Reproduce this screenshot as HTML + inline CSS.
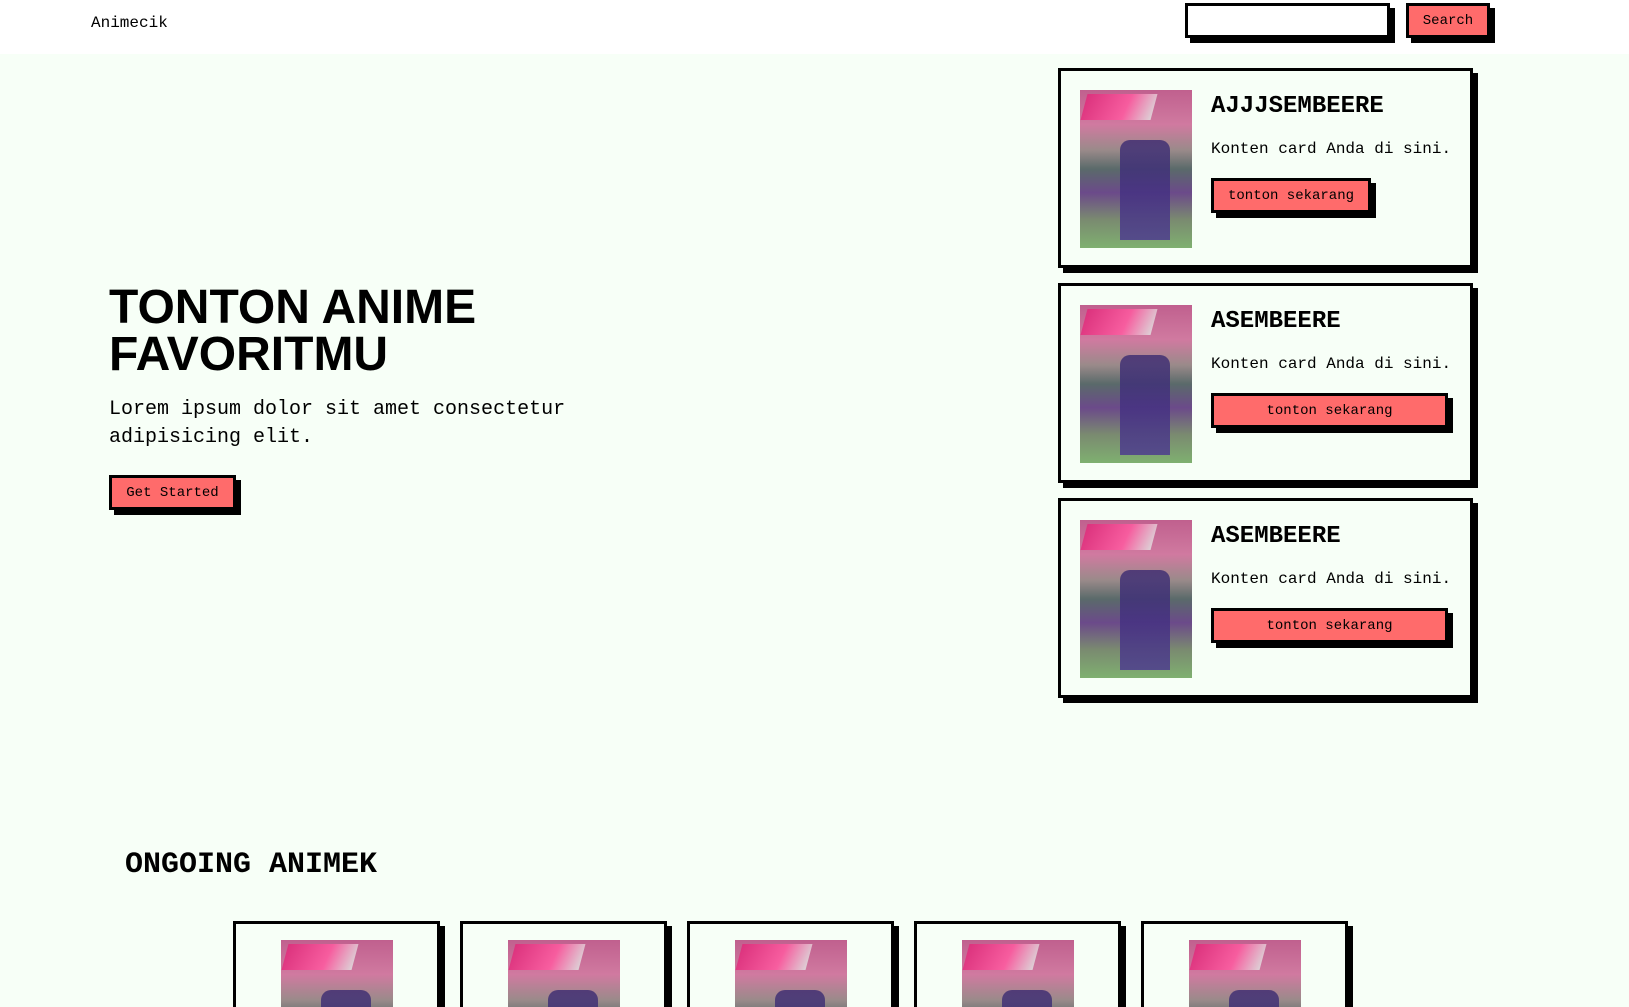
<!DOCTYPE html>
<html><head><style>
*{box-sizing:border-box;margin:0;padding:0}
html,body{width:1629px;height:1007px;overflow:hidden}
body{background:#f7fff7;font-family:"Liberation Mono",monospace;color:#000;position:relative}
.hdr{position:absolute;left:0;top:0;width:1629px;height:54px;background:#fff}
.abs{position:absolute}
.btn{position:absolute;background:#ff6b6b;border:3px solid #000;box-shadow:5px 5px 0 #000;font-size:14px;display:flex;align-items:center;justify-content:center;color:#000}
.card{position:absolute;left:1058px;width:415px;height:200px;border:3px solid #000;box-shadow:5px 5px 0 #000;background:#f7fff7}
.img{position:absolute;width:112px;height:158px;background:
linear-gradient(180deg,#c0608e 0%,#d07aa0 22%,#9a8a8a 38%,#5a6a6a 50%,#6b4a8a 65%,#7a8a70 82%,#7fb070 100%)}
.img:before{content:"";position:absolute;left:4px;top:4px;width:70px;height:26px;background:linear-gradient(100deg,#e02a7a,#ff5aa0 60%,#e0e0e0);transform:skewX(-15deg);opacity:.85}
.img:after{content:"";position:absolute;left:40px;top:50px;width:50px;height:100px;background:linear-gradient(180deg,#3a2a70,#4a3590);border-radius:10px 10px 0 0;opacity:.8}
.ct{position:absolute;left:150px;top:22px;font-size:24px;font-weight:bold}
.cp{position:absolute;left:150px;top:69px;font-size:16px}
.bc{position:absolute;top:921px;width:207px;height:86px;border:3px solid #000;border-bottom:none;box-shadow:5px 5px 0 #000;background:#f7fff7;overflow:hidden}
.bc .img{left:45px;top:16px}
</style></head><body>
<div class="hdr"></div>
<div class="abs" style="left:91px;top:14px;font-size:16px">Animecik</div>
<div class="abs" style="left:1185px;top:3px;width:205px;height:35px;background:#fff;border:3px solid #000;box-shadow:5px 5px 0 #000"></div>
<div class="btn" style="left:1406px;top:3px;width:84px;height:35px">Search</div>

<div class="abs" style="left:109px;top:284px;font-family:'Liberation Sans',sans-serif;font-weight:bold;font-size:48px;line-height:47px">TONTON ANIME<br>FAVORITMU</div>
<div class="abs" style="left:109px;top:396px;font-size:20px;line-height:28px;width:480px">Lorem ipsum dolor sit amet consectetur adipisicing elit.</div>
<div class="btn" style="left:109px;top:475px;width:127px;height:35px">Get Started</div>

<div class="card" style="top:68px"><div class="img" style="left:19px;top:19px"></div><div class="ct">AJJJSEMBEERE</div><div class="cp">Konten card Anda di sini.</div><div class="btn" style="left:150px;top:107px;width:160px;height:35px">tonton sekarang</div></div>
<div class="card" style="top:283px"><div class="img" style="left:19px;top:19px"></div><div class="ct">ASEMBEERE</div><div class="cp">Konten card Anda di sini.</div><div class="btn" style="left:150px;top:107px;width:237px;height:35px">tonton sekarang</div></div>
<div class="card" style="top:498px"><div class="img" style="left:19px;top:19px"></div><div class="ct">ASEMBEERE</div><div class="cp">Konten card Anda di sini.</div><div class="btn" style="left:150px;top:107px;width:237px;height:35px">tonton sekarang</div></div>

<div class="abs" style="left:125px;top:848px;font-size:30px;font-weight:bold">ONGOING ANIMEK</div>
<div class="bc" style="left:233px"><div class="img"></div></div>
<div class="bc" style="left:460px"><div class="img"></div></div>
<div class="bc" style="left:687px"><div class="img"></div></div>
<div class="bc" style="left:914px"><div class="img"></div></div>
<div class="bc" style="left:1141px"><div class="img"></div></div>
</body></html>
